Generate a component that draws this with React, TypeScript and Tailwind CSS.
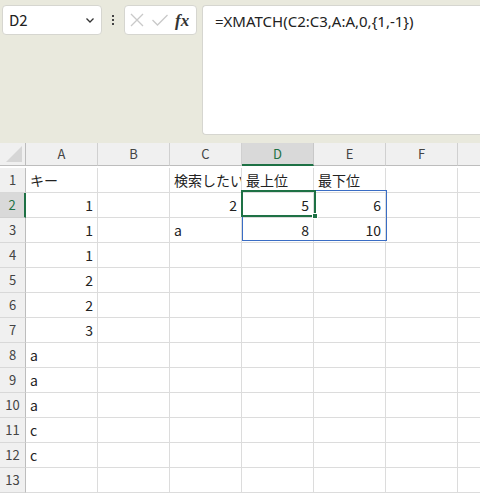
import React from 'react';

const COLS = ['A', 'B', 'C', 'D', 'E', 'F', 'G'];

type Cell = { v: string; right?: boolean };

const data: Record<string, Cell> = {
  A1: { v: 'キー' },
  A2: { v: '1', right: true },
  A3: { v: '1', right: true },
  A4: { v: '1', right: true },
  A5: { v: '2', right: true },
  A6: { v: '2', right: true },
  A7: { v: '3', right: true },
  A8: { v: 'a' },
  A9: { v: 'a' },
  A10: { v: 'a' },
  A11: { v: 'c' },
  A12: { v: 'c' },
  C1: { v: '検索したい' },
  D1: { v: '最上位' },
  E1: { v: '最下位' },
  C2: { v: '2', right: true },
  D2: { v: '5', right: true },
  E2: { v: '6', right: true },
  C3: { v: 'a' },
  D3: { v: '8', right: true },
  E3: { v: '10', right: true },
};

const font = { fontFamily: '"Noto Sans CJK JP", "Noto Sans", sans-serif' };

function Toolbar() {
  return (
    <div className="h-[143px] bg-[#e9e9dd] pt-[5px] pl-[2px] flex items-start">
      <div className="w-[100px] h-[30px] bg-white rounded-[4px] border border-[#d6d6d0] flex items-center justify-between pl-[6px] pr-[4px]">
        <span className="text-[15px] text-[#222]" style={font}>D2</span>
        <svg width="12" height="12" viewBox="0 0 12 12" className="mr-[1px]">
          <path d="M2.5 4.5 L6 8 L9.5 4.5" fill="none" stroke="#333" strokeWidth="1.3" />
        </svg>
      </div>
      <div className="w-[22px] h-[30px] flex flex-col items-center justify-center gap-[2px]">
        <span className="w-[2px] h-[2px] bg-[#444]" />
        <span className="w-[2px] h-[2px] bg-[#444]" />
        <span className="w-[2px] h-[2px] bg-[#444]" />
      </div>
      <div className="w-[73px] h-[30px] bg-white rounded-[4px] border border-[#d6d6d0] flex items-center pl-[4px] gap-[6px]">
        <svg width="16" height="16" viewBox="0 0 16 16">
          <path d="M2 2 L14 14 M14 2 L2 14" stroke="#c9c9c9" strokeWidth="1.3" />
        </svg>
        <svg width="18" height="16" viewBox="0 0 18 16">
          <path d="M1.5 8 L6.5 13 L16.5 3" fill="none" stroke="#c9c9c9" strokeWidth="1.3" />
        </svg>
        <span className="text-[17px] italic font-bold text-[#333] leading-none" style={{ fontFamily: '"Liberation Serif", serif' }}>
          fx
        </span>
      </div>
      <div className="ml-[5px] flex-1 h-[130px] bg-white rounded-l-[4px] border border-r-0 border-[#d6d6d0] pl-[12px] pt-[3px]">
        <span className="text-[15px] text-[#222]" style={{ fontFamily: '"Noto Sans", sans-serif' }}>
          =XMATCH(C2:C3,A:A,0,{'{'}1,-1{'}'})
        </span>
      </div>
    </div>
  );
}

function Grid() {
  const rows = Array.from({ length: 13 }, (_, i) => i + 1);
  return (
    <div className="relative" style={font}>
      <div className="grid grid-cols-[26px_repeat(7,72px)] auto-rows-[25px] w-[530px]">
        {/* header row */}
        <div className="h-[23px] bg-[#f0f0f0] border-r border-b border-[#bdbdbd] relative">
          <svg width="16" height="16" viewBox="0 0 16 16" className="absolute right-[3px] bottom-[3px]">
            <path d="M16 0 L16 16 L0 16 Z" fill="#d6d6d6" />
          </svg>
        </div>
        {COLS.map((c) => (
          <div
            key={c}
            className={
              c === 'D'
                ? 'h-[23px] bg-[#d9d9d9] border-r border-[#c8c8c8] border-b-2 border-b-[#1e7145] flex items-center justify-center text-[13px] text-[#1e7145]'
                : 'h-[23px] bg-[#f0f0f0] border-r border-b border-[#d0d0d0] border-b-[#bdbdbd] flex items-center justify-center text-[13px] text-[#444]'
            }
          >
            {c === 'G' ? '' : c}
          </div>
        ))}
        {rows.map((r) => (
          <React.Fragment key={r}>
            <div
              className={
                r === 2
                  ? 'bg-[#d9d9d9] border-r-2 border-r-[#1e7145] border-b border-b-[#d0d0d0] flex items-center justify-center text-[13px] text-[#1e7145]'
                  : 'bg-[#f0f0f0] border-r border-r-[#bdbdbd] border-b border-b-[#d8d8d8] flex items-center justify-center text-[13px] text-[#444]'
              }
            >
              {r}
            </div>
            {COLS.map((c) => {
              const cell = data[c + r];
              return (
                <div
                  key={c}
                  className={
                    'bg-white border-r border-b border-[#dcdcdc] flex items-center px-[4px] overflow-hidden whitespace-nowrap text-[14px] text-[#222] ' +
                    (cell?.right ? 'justify-end' : 'justify-start')
                  }
                >
                  {cell?.v}
                </div>
              );
            })}
          </React.Fragment>
        ))}
      </div>
      {/* range D2:E3 */}
      <div className="absolute left-[242px] top-[47px] w-[145px] h-[51px] border border-[#3a6dc5] pointer-events-none" />
      {/* active cell D2 */}
      <div className="absolute left-[241px] top-[47px] w-[75px] h-[27px] border-2 border-[#1e7145] pointer-events-none" />
      <div className="absolute left-[312px] top-[70px] w-[6px] h-[6px] bg-[#1e7145] border border-white pointer-events-none" />
    </div>
  );
}

export default function App() {
  return (
    <div className="w-[480px] h-[494px] overflow-hidden bg-white">
      <Toolbar />
      <Grid />
    </div>
  );
}
